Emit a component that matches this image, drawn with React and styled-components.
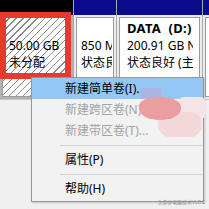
import React from 'react';
import styled, { createGlobalStyle } from 'styled-components';

const GlobalStyle = createGlobalStyle`
  html, body {
    margin: 0;
    padding: 0;
  }
  body {
    background: #f0f0f0;
    font-family: "Noto Sans", "Noto Sans CJK SC", sans-serif;
  }
`;

const Screen = styled.div`
  position: relative;
  width: 209px;
  height: 209px;
  overflow: hidden;
  background: #f0f0f0;
`;

const DiskRow = styled.div`
  display: flex;
  gap: 1px;
  height: 100px;
  box-sizing: border-box;
  background: #a9a9a9;
  border-bottom: 1px solid #c6c6c6;
`;

const Partition = styled.div`
  display: flex;
  flex-direction: column;
  width: ${(p) => (p.$w ? `${p.$w}px` : 'auto')};
  flex: ${(p) => (p.$w ? '0 0 auto' : '1')};
  background: ${(p) => (p.$selected ? '#b3b3b3' : '#ececec')};
`;

const Bar = styled.div`
  height: 15px;
  background: ${(p) => p.$color};
`;

const Body = styled.div`
  flex: 1;
  display: flex;
  padding: 2px;
  min-height: 0;
`;

const Box = styled.div`
  flex: 1;
  min-width: 0;
  padding-top: 2px;
  border: 1px solid #9c9c9c;
  overflow: hidden;
  background: ${(p) =>
    p.$hatched
      ? 'repeating-linear-gradient(135deg, #ffffff 0 4px, #8a8a8a 4px 5px)'
      : '#ffffff'};
`;

const Lines = styled.div`
  margin: 0 ${(p) => p.$right}px 0 ${(p) => p.$left}px;
  overflow: hidden;
  white-space: nowrap;
  font-size: 12px;
  line-height: 17px;
  color: #000;
`;

const Name = styled.div`
  font-size: 13px;
  font-weight: 700;
  letter-spacing: 0.3px;
  white-space: pre;
`;

const Line = styled.div``;

const Highlight = styled.div`
  position: absolute;
  left: 0;
  top: 12px;
  width: 71px;
  height: 67px;
  box-sizing: border-box;
  border: 6px solid #e8392f;
`;

const Menu = styled.div`
  position: absolute;
  left: 31px;
  top: 77px;
  width: 173px;
  box-sizing: border-box;
  padding-bottom: 2px;
  background: #f2f2f2;
  border: 1px solid #979797;
  box-shadow: 1px 1px 2px rgba(0, 0, 0, 0.18);
  font-size: 12px;
`;

const Item = styled.div`
  height: 21px;
  line-height: 21px;
  padding-left: 33px;
  white-space: nowrap;
  color: ${(p) => (p.$disabled ? '#a3a3a3' : '#000')};
  background: ${(p) => (p.$active ? '#94c8f4' : 'transparent')};
`;

const Separator = styled.div`
  height: 8px;
  display: flex;
  align-items: center;
  padding-left: 28px;
  padding-right: 1px;

  &::after {
    content: '';
    flex: 1;
    height: 1px;
    background: #d3d3d3;
  }
`;

const Smudge = styled.div`
  position: absolute;
  left: ${(p) => p.$x}px;
  top: ${(p) => p.$y}px;
  width: ${(p) => p.$w}px;
  height: ${(p) => p.$h}px;
  border-radius: ${(p) => p.$r};
  background: ${(p) => p.$c};
`;

const Watermark = styled.div`
  position: absolute;
  right: 4px;
  bottom: 4px;
  font-size: 10px;
  color: #8c8c8c;
  white-space: nowrap;
  transform: scale(0.5);
  transform-origin: right bottom;
`;

const partitions = [
  { w: 73, color: '#000', selected: true, hatched: true, left: 6, right: 2, name: '', lines: ['50.00 GB', '未分配'] },
  { w: 42, color: '#0a0a8c', left: 4, right: 1, name: '', lines: ['850 M', '状态良'] },
  { w: 85, color: '#0a0a8c', left: 7, right: 6, name: 'DATA  (D:)', lines: ['200.91 GB N', '状态良好 (主'] },
  { color: '#0a0a8c', left: 4, right: 1, name: '', lines: [] },
];

const menu = [
  { label: '新建简单卷(I)...', active: true },
  { label: '新建跨区卷(N)...', disabled: true },
  { label: '新建带区卷(T)...', disabled: true },
  { sep: true },
  { label: '属性(P)' },
  { sep: true },
  { label: '帮助(H)' },
];

export default function App() {
  return (
    <Screen>
      <GlobalStyle />
      <DiskRow>
        {partitions.map((p, i) => (
          <Partition key={i} $w={p.w} $selected={p.selected}>
            <Bar $color={p.color} />
            <Body>
              <Box $hatched={p.hatched}>
                <Lines $left={p.left} $right={p.right}>
                  <Name>{p.name || '\u00a0'}</Name>
                  {p.lines.map((l) => (
                    <Line key={l}>{l}</Line>
                  ))}
                </Lines>
              </Box>
            </Body>
          </Partition>
        ))}
      </DiskRow>

      <Highlight />

      <Menu>
        {menu.map((m, i) =>
          m.sep ? (
            <Separator key={i} />
          ) : (
            <Item key={i} $active={m.active} $disabled={m.disabled}>
              {m.label}
            </Item>
          )
        )}
      </Menu>

      <Smudge $x={140} $y={88} $w={22} $h={10} $r="3px" $c="#a9b5e3" />
      <Smudge $x={178} $y={97} $w={28} $h={22} $r="6px" $c="#f3e5e5" />
      <Smudge $x={158} $y={112} $w={44} $h={25} $r="12px" $c="#f3d8d9" />
      <Smudge $x={139} $y={97} $w={42} $h={23} $r="40% 45% 50% 50%" $c="#eb9ea0" />

      <Watermark>头条@电脑技术VLOG</Watermark>
    </Screen>
  );
}
